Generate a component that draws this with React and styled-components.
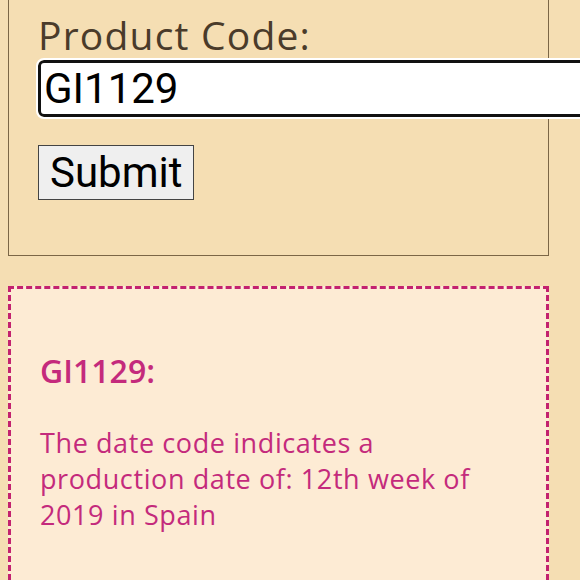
import React, { useState } from 'react'
import styled, { createGlobalStyle } from 'styled-components'

const GlobalStyle = createGlobalStyle`
  html, body {
    margin: 0;
    background: #f5deb3;
    overflow: hidden;
  }
  body {
    padding: 0 8px;
    font-family: "Open Sans", "Noto Sans", sans-serif;
  }
`

const Page = styled.main`
  display: flex;
  flex-direction: column;
  gap: 30px;
  width: 541px;
`

const FormBox = styled.form`
  border: 1px solid #7b6646;
  border-top: none;
  padding: 12px 0 55px 29px;
  display: flex;
  flex-direction: column;
  align-items: flex-start;
`

const Label = styled.label`
  font-size: 39px;
  line-height: 46px;
  letter-spacing: 1.2px;
  color: #4a3b2a;
  font-family: "Open Sans", sans-serif;
`

const CodeInput = styled.input`
  margin-top: 2px;
  width: 600px;
  height: 57px;
  box-sizing: border-box;
  padding: 0 3px;
  border: 3px solid #111;
  border-radius: 6px;
  outline: 2px solid #fff;
  background: #fff;
  font-family: Roboto, sans-serif;
  font-size: 42px;
  color: #000;
`

const SubmitButton = styled.button`
  margin-top: 28px;
  height: 55px;
  padding: 0 11px;
  background: #efefef;
  border: 1px solid #444;
  border-radius: 0;
  font-family: Roboto, sans-serif;
  font-size: 42px;
  color: #000;
`

const ResultBox = styled.section`
  border: 3px dashed #c3226f;
  background: #fdebd4;
  padding: 62px 30px 80px 29px;
  color: #c42a7c;
`

const Code = styled.h2`
  margin: 0;
  font-size: 32px;
  line-height: 40px;
  font-weight: 600;
`

const Message = styled.p`
  margin: 34px 0 0;
  font-size: 27px;
  line-height: 36px;
  letter-spacing: 0.6px;
  max-width: 450px;
`

export default function App() {
  const [code, setCode] = useState('GI1129')
  return (
    <>
      <GlobalStyle />
      <Page>
        <FormBox onSubmit={e => e.preventDefault()}>
          <Label htmlFor="code">Product Code:</Label>
          <CodeInput id="code" value={code} onChange={e => setCode(e.target.value)} />
          <SubmitButton type="submit">Submit</SubmitButton>
        </FormBox>
        <ResultBox>
          <Code>GI1129:</Code>
          <Message>The date code indicates a production date of: 12th week of 2019 in Spain</Message>
        </ResultBox>
      </Page>
    </>
  )
}
